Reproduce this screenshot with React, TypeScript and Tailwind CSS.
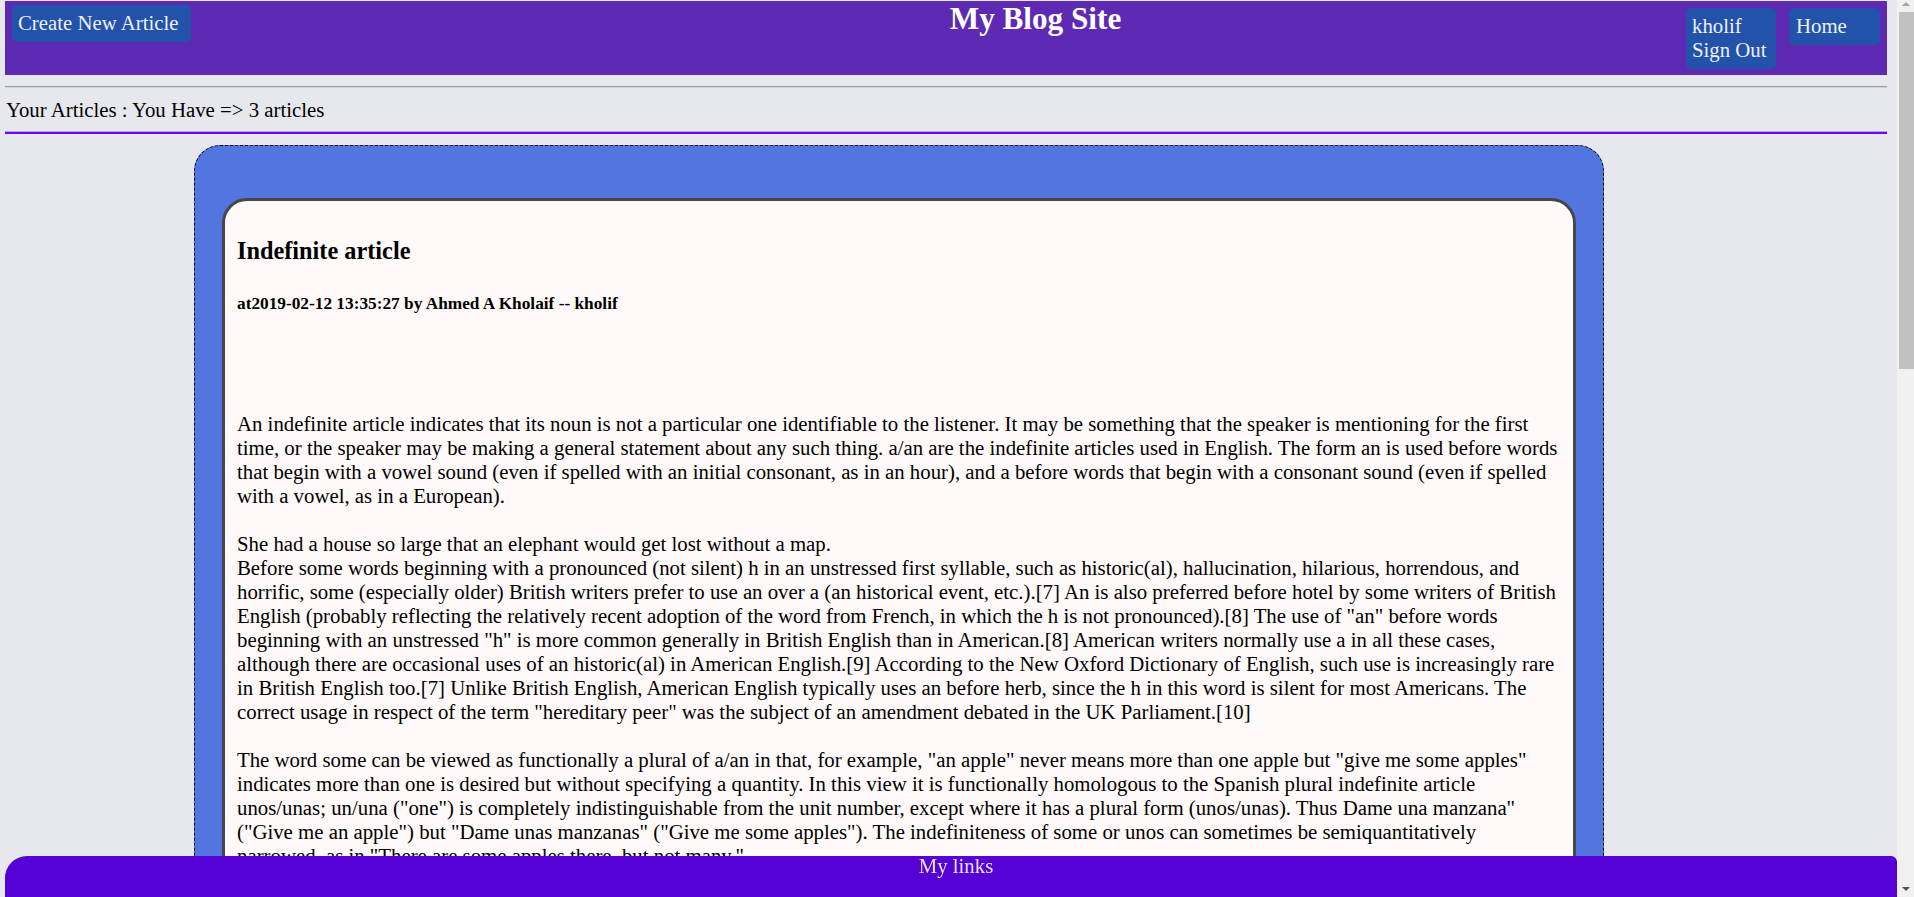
import React from 'react';

type Article = {
  id: number;
  title: string;
  createdAt: string;
  author: string;
  username: string;
  body: string;
};

const ARTICLES: Article[] = [
  {
    id: 1,
    title: 'Indefinite article',
    createdAt: '2019-02-12 13:35:27',
    author: 'Ahmed A Kholaif',
    username: 'kholif',
    body: `An indefinite article indicates that its noun is not a particular one identifiable to the listener. It may be something that the speaker is mentioning for the first time, or the speaker may be making a general statement about any such thing. a/an are the indefinite articles used in English. The form an is used before words that begin with a vowel sound (even if spelled with an initial consonant, as in an hour), and a before words that begin with a consonant sound (even if spelled with a vowel, as in a European).

She had a house so large that an elephant would get lost without a map.
Before some words beginning with a pronounced (not silent) h in an unstressed first syllable, such as historic(al), hallucination, hilarious, horrendous, and horrific, some (especially older) British writers prefer to use an over a (an historical event, etc.).[7] An is also preferred before hotel by some writers of British English (probably reflecting the relatively recent adoption of the word from French, in which the h is not pronounced).[8] The use of "an" before words beginning with an unstressed "h" is more common generally in British English than in American.[8] American writers normally use a in all these cases, although there are occasional uses of an historic(al) in American English.[9] According to the New Oxford Dictionary of English, such use is increasingly rare in British English too.[7] Unlike British English, American English typically uses an before herb, since the h in this word is silent for most Americans. The correct usage in respect of the term "hereditary peer" was the subject of an amendment debated in the UK Parliament.[10]

The word some can be viewed as functionally a plural of a/an in that, for example, "an apple" never means more than one apple but "give me some apples" indicates more than one is desired but without specifying a quantity. In this view it is functionally homologous to the Spanish plural indefinite article unos/unas; un/una ("one") is completely indistinguishable from the unit number, except where it has a plural form (unos/unas). Thus Dame una manzana" ("Give me an apple") but "Dame unas manzanas" ("Give me some apples"). The indefiniteness of some or unos can sometimes be semiquantitatively narrowed, as in "There are some apples there, but not many."

Other languages use a form of the number "one" as an indefinite article, for example the Scots ae and yin, the German ein, the French un/une, the Italian uno/una and the Portuguese um/uma. In some languages, such as Chinese, the indefinite article is generally omitted and a numeral classifier is used instead when the speaker wishes to stress that a single item is meant.`,
  },
  {
    id: 2,
    title: 'Definite article',
    createdAt: '2019-02-10 09:12:04',
    author: 'Ahmed A Kholaif',
    username: 'kholif',
    body: `A definite article is an article that marks a definite noun phrase. Definite articles such as English the are used to refer to a particular member of a group or class. This may be something that the speaker has already mentioned or it may be something uniquely specified.

Give me the book.
The definite article in English, for both singular and plural nouns, is the. In some languages the definite article is attached to the noun as a suffix, as in Romanian, Bulgarian, Albanian and the Scandinavian languages.`,
  },
  {
    id: 3,
    title: 'Zero article',
    createdAt: '2019-02-08 18:40:51',
    author: 'Ahmed A Kholaif',
    username: 'kholif',
    body: `The zero article is the absence of an article. In languages having a definite article, the lack of an article specifically indicates that the noun is indefinite. Linguists interested in X-bar theory causally link zero articles to nouns lacking a determiner.

In English, the zero article rather than the indefinite is used with plurals and mass nouns, although the word "some" can be used as an indefinite plural article.`,
  },
];

function HeaderButton({ children, className = '' }: { children: React.ReactNode; className?: string }) {
  return (
    <a
      href="#"
      className={`block rounded-[5px] bg-[#2252a9] pt-[6px] pb-[7px] text-[#eef0f6] ${className}`}
    >
      {children}
    </a>
  );
}

function ArticleCard({ article }: { article: Article }) {
  return (
    <div className="rounded-[25px] border-[3px] border-[#474747] bg-[#fff9f9] px-[12px] pb-[36px] text-black">
      <h3 className="mt-[36px] text-[24.3px] font-bold">{article.title}</h3>
      <h5 className="mt-[29px] text-[17.3px] font-bold">
        at{article.createdAt} by {article.author} -- {article.username}
      </h5>
      <p className="mt-[98px] whitespace-pre-line">{article.body}</p>
    </div>
  );
}

// classic window scrollbar, as in the screenshot
function ScrollBar() {
  return (
    <div className="fixed top-0 right-0 flex h-screen w-[17px] flex-col bg-[#f1f1f1]">
      <div className="flex h-[12px] items-start justify-center pt-[2px] pl-[1px]">
        <div className="h-0 w-0 border-x-[4px] border-b-[4px] border-x-transparent border-b-[#a3a3a3]" />
      </div>
      <div className="ml-[2px] h-[357px] bg-[#c1c1c1]" />
      <div className="flex-1" />
      <div className="flex h-[17px] items-center justify-center pl-[1px]">
        <div className="h-0 w-0 border-x-[4px] border-t-[4px] border-x-transparent border-t-[#505050]" />
      </div>
    </div>
  );
}

export default function App() {
  return (
    <div
      className="min-h-screen bg-[#e7e8ee] pr-[17px] pb-[80px] text-[20.8px] leading-[normal]"
      style={{ fontFamily: '"Liberation Serif", "Times New Roman", serif' }}
    >
      <div className="ml-[5px] mr-[10px] pt-[1px]">
        {/* Top bar */}
        <header className="grid h-[74px] grid-cols-[auto_1fr_auto] items-start bg-[#5e2ab3] px-[7px]">
          <HeaderButton className="col-start-1 row-start-1 mt-[4px] w-[179px] pl-[6px]">
            Create New Article
          </HeaderButton>
          <h1 className="col-start-2 col-end-4 row-start-1 text-center text-[31.2px] font-bold text-white">
            My Blog Site
          </h1>
          <div className="col-start-3 row-start-1 mt-[7px] flex items-start gap-[13px]">
            <HeaderButton className="w-[90px] pl-[6px]">
              kholif
              <br />
              Sign Out
            </HeaderButton>
            <HeaderButton className="w-[91px] pl-[7px]">Home</HeaderButton>
          </div>
        </header>

        <div className="mt-[11px] border-t border-b border-t-[#9c9c9c] border-b-[#d4d4d8]" />

        <div className="mt-[10px] pl-[1px]">Your Articles : You Have =&gt; {ARTICLES.length} articles</div>

        <div className="mt-[9px] border-t border-b-[2px] border-t-[#b0a8c8] border-b-[#7300ff]" />

        {/* Articles list */}
        <div className="ml-[189px] mt-[11px] w-[1410px] rounded-[26px] border border-dashed border-black bg-[#5375e0] px-[27px] pt-[52px] pb-[52px]">
          <div className="flex flex-col gap-[52px]">
            {ARTICLES.map((a) => (
              <ArticleCard key={a.id} article={a} />
            ))}
          </div>
        </div>
      </div>

      <footer className="fixed bottom-0 left-[5px] right-[17px] h-[41px] rounded-tl-[22px] rounded-tr-[6px] bg-[#5500d4] pl-[10px] text-center leading-[20px] text-[#e6e2f6]">
        My links
      </footer>

      <ScrollBar />
    </div>
  );
}
